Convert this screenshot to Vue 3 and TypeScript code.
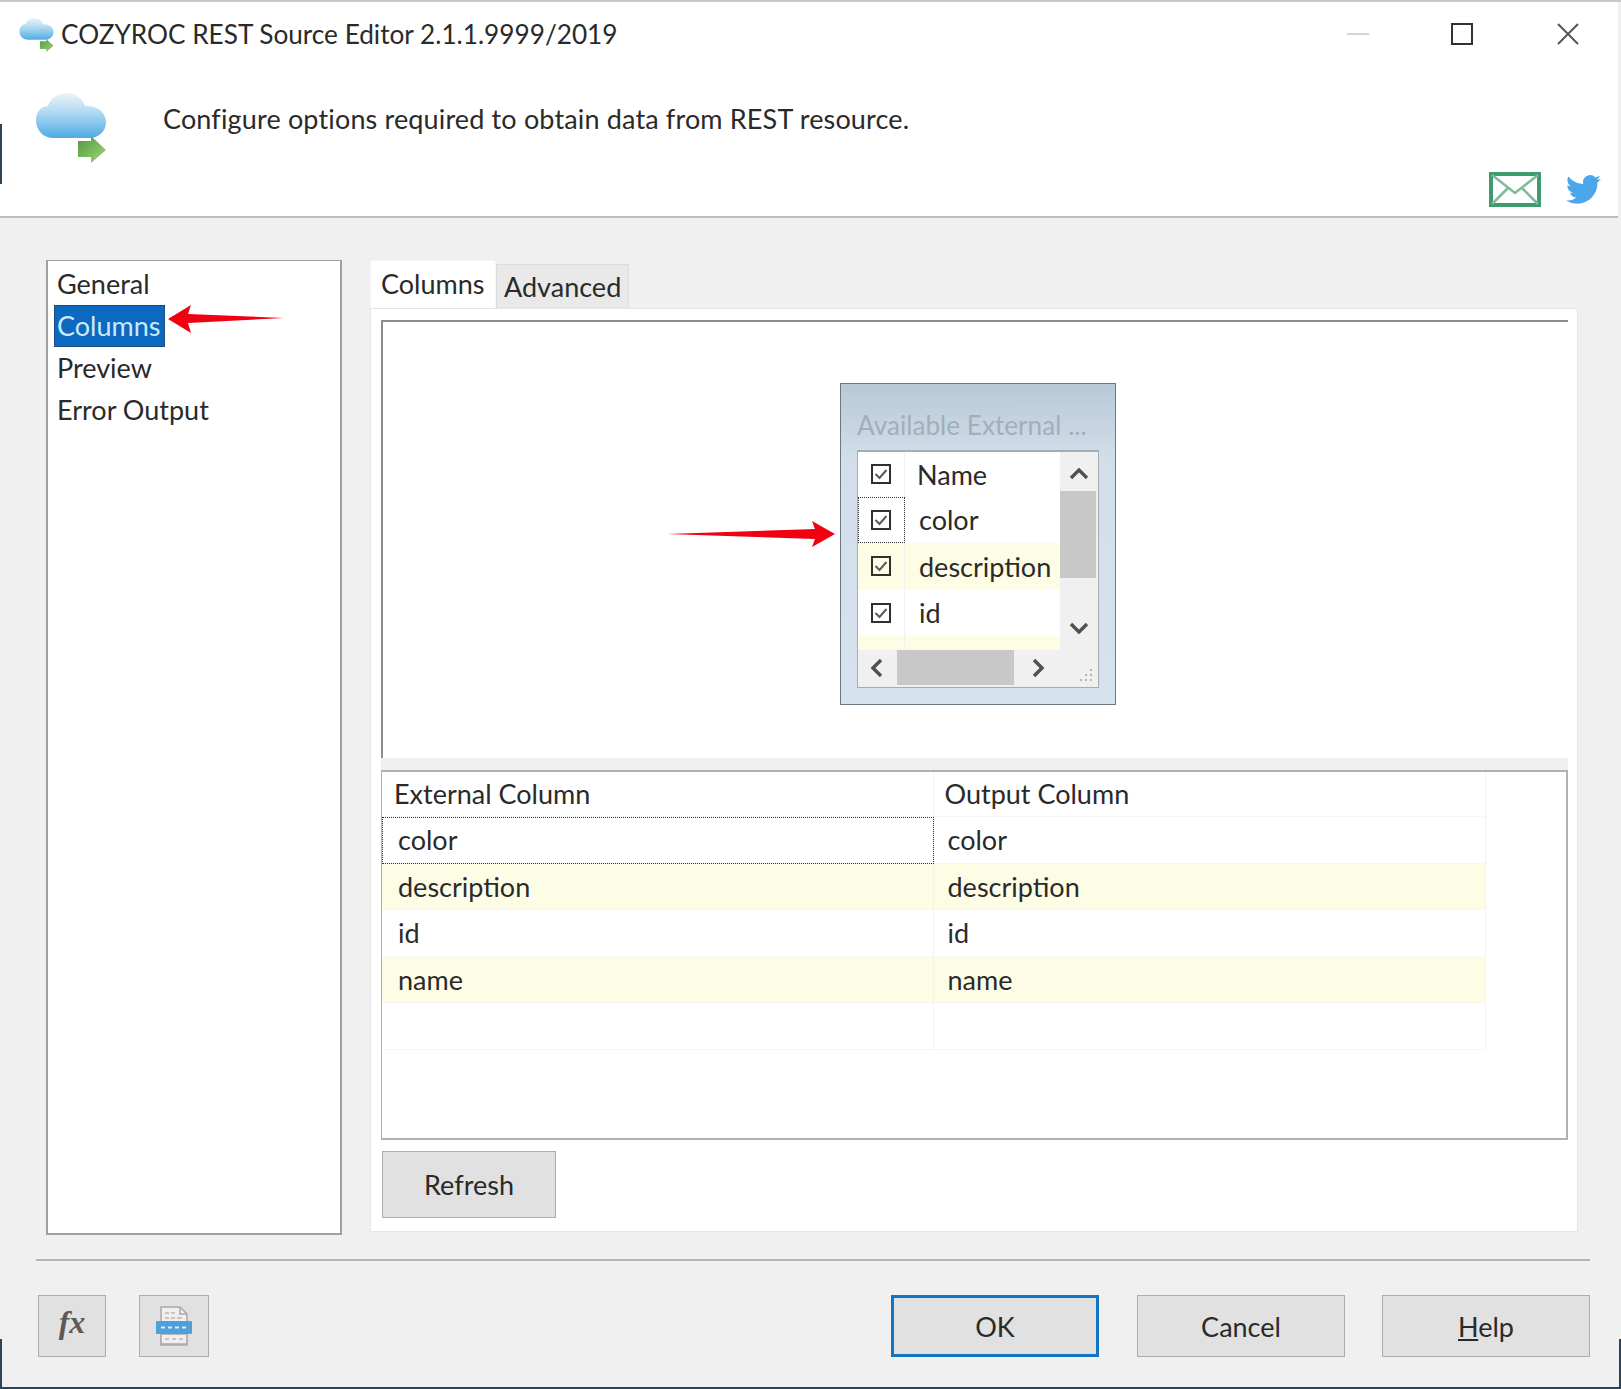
<template>
  <div class="window">
    <!-- header strip -->
    <header class="head">
      <div class="title-row">
        <svg class="cloud-sm" viewBox="0 0 72 72"><use href="#cloud" /></svg>
        <span class="title">COZYROC REST Source Editor 2.1.1.9999/2019</span>
        <div class="win-ctrls">
          <span class="ctl-min"></span>
          <span class="ctl-max"></span>
          <svg class="ctl-close" viewBox="0 0 22 22"><path d="M1 1l20 20M21 1L1 21" /></svg>
        </div>
      </div>
      <div class="desc-row">
        <svg class="cloud-lg" viewBox="0 0 72 72">
          <defs>
            <linearGradient id="cloudFill" x1="0" y1="0" x2="0" y2="1">
              <stop offset="0" stop-color="#eef4f7" />
              <stop offset="0.4" stop-color="#b4dcf2" />
              <stop offset="1" stop-color="#4fabe4" />
            </linearGradient>
            <linearGradient id="arrowFill" x1="0" y1="0" x2="1" y2="1">
              <stop offset="0" stop-color="#4f9a3c" />
              <stop offset="1" stop-color="#a4d47c" />
            </linearGradient>
            <filter id="soft"><feGaussianBlur stdDeviation="0.6" /></filter>
            <g id="cloud" filter="url(#soft)">
              <path fill="url(#cloudFill)" d="M1 29C1 20 7 15 13 15 15 7 24 2 32 2 41 2 48 8 50 15 60 14 71 20 71 31 71 41 63 47 54 47L18 47C8 47 1 39 1 29Z" />
              <path fill="url(#arrowFill)" d="M43 50h13v-5l15 14-15 13v-6H43z" />
            </g>
          </defs>
          <use href="#cloud" />
        </svg>
        <p class="desc">Configure options required to obtain data from REST resource.</p>
      </div>
      <div class="social">
        <svg class="mail" viewBox="0 0 52 35">
          <rect x="2" y="2" width="48" height="31" />
          <path d="M3 3l23 18L49 3M3 32l16-16M49 32L33 16" />
        </svg>
        <svg class="bird" viewBox="0 0 24 24"><path d="M23.953 4.57a10 10 0 01-2.825.775 4.958 4.958 0 002.163-2.723c-.951.555-2.005.959-3.127 1.184a4.92 4.92 0 00-8.384 4.482C7.69 8.095 4.067 6.13 1.64 3.162a4.822 4.822 0 00-.666 2.475c0 1.71.87 3.213 2.188 4.096a4.904 4.904 0 01-2.228-.616v.06a4.923 4.923 0 003.946 4.827 4.996 4.996 0 01-2.212.085 4.936 4.936 0 004.604 3.417 9.867 9.867 0 01-6.102 2.105c-.39 0-.779-.023-1.17-.067a13.995 13.995 0 007.557 2.209c9.053 0 13.998-7.496 13.998-13.985 0-.21 0-.42-.015-.63A9.935 9.935 0 0024 4.59z" /></svg>
      </div>
    </header>

    <main class="body">
      <!-- left nav list -->
      <aside class="nav">
        <div v-for="item in NAV" :key="item" class="nav-item">
          <span :class="{ sel: item === 'Columns' }">{{ item }}</span>
        </div>
        <svg class="arrow arrow-left" viewBox="0 0 116 28"><path d="M0 14L23 0l-3 9 96 4-96 5 3 10z" /></svg>
      </aside>

      <section class="page">
        <div class="tabs">
          <span class="tab active">Columns</span>
          <span class="tab">Advanced</span>
        </div>
        <div class="pane">
          <div class="canvas">
            <svg class="arrow arrow-right" viewBox="0 0 168 26"><path d="M168 13L145 0l3 8L0 13l148 5-3 8z" /></svg>
            <div class="float-box">
              <div class="float-title">Available External ...</div>
              <div class="float-list">
                <div class="float-rows">
                  <div
                    v-for="(row, i) in AVAILABLE"
                    :key="row"
                    class="f-row"
                    :class="{ alt: i === 2, 'f-head': i === 0 }"
                  >
                    <span class="f-check" :class="{ focus: i === 1 }">
                      <svg viewBox="0 0 20 20"><rect x="1" y="1" width="18" height="18" /><path d="M4.5 10l4 4 7-8" /></svg>
                    </span>
                    <span class="f-name">{{ row }}</span>
                  </div>
                  <div class="f-row alt stub"><span class="f-check"></span></div>
                </div>
                <div class="vscroll">
                  <svg class="chev up" viewBox="0 0 20 12"><path d="M2 10l8-8 8 8" /></svg>
                  <div class="vthumb"></div>
                  <svg class="chev down" viewBox="0 0 20 12"><path d="M2 2l8 8 8-8" /></svg>
                </div>
                <div class="hscroll">
                  <svg class="chev left" viewBox="0 0 12 20"><path d="M10 2l-8 8 8 8" /></svg>
                  <div class="hthumb"></div>
                  <svg class="chev right" viewBox="0 0 12 20"><path d="M2 2l8 8-8 8" /></svg>
                </div>
                <svg class="grip" viewBox="0 0 15 15"><path d="M12 1h2v2h-2zM7 6h2v2H7zM12 6h2v2h-2zM2 11h2v2H2zM7 11h2v2H7zM12 11h2v2h-2z" /></svg>
              </div>
            </div>
          </div>

          <div class="split"></div>

          <div class="grid">
            <div class="g-row g-head">
              <span class="g-cell">External Column</span>
              <span class="g-cell">Output Column</span>
            </div>
            <div
              v-for="(name, i) in ROWS"
              :key="i"
              class="g-row"
              :class="{ alt: i % 2 === 1 }"
            >
              <span class="g-cell" :class="{ focus: i === 0 }">{{ name }}</span>
              <span class="g-cell">{{ name }}</span>
            </div>
          </div>

          <button class="btn refresh">Refresh</button>
        </div>
      </section>
    </main>

    <footer class="foot">
      <div class="rule"></div>
      <div class="foot-row">
        <button class="btn icon-btn fx">fx</button>
        <button class="btn icon-btn print">
          <svg viewBox="0 0 36 40">
            <path class="pg" d="M5 1h19l7 7v11H5zM5 32h26v7H5z" />
            <path class="fold" d="M24 1v7h7" />
            <path class="ln" d="M9 7h4M15 7h4M9 12h4M15 12h4M21 12h5" />
            <path class="pgb" d="M5 28h26v10H5z" />
            <path class="ln" d="M9 33h4M16 33h4M23 33h4" />
            <rect class="band" x="0" y="15" width="36" height="13" rx="1" />
            <path class="dots" d="M5 21.500h4M12 21.500h4M19 21.500h4M26 21.500h4" />
          </svg>
        </button>
        <button class="btn act ok">OK</button>
        <button class="btn act">Cancel</button>
        <button class="btn act help"><u>H</u>elp</button>
      </div>
    </footer>
    <i class="edge edge-a"></i>
    <i class="edge edge-b"></i>
    <i class="edge edge-c"></i>
  </div>
</template>

<script setup lang="ts">
const NAV: string[] = ['General', 'Columns', 'Preview', 'Error Output'];
const AVAILABLE: string[] = ['Name', 'color', 'description', 'id'];
const ROWS: string[] = ['color', 'description', 'id', 'name', ''];
</script>

<style>
html, body { margin: 0; background: #f0f0f0; overflow: hidden; }
</style>

<style scoped>
.window {
  position: relative;
  width: 1621px;
  height: 1389px;
  box-sizing: border-box;
  display: flex;
  flex-direction: column;
  background: #f0f0f0;
  border-top: 2px solid #c9c9c9;
  border-bottom: 2px solid #2f4358;
  font-family: "Lato", "Liberation Sans", sans-serif;
  font-size: 27px;
  color: #2a2a2a;
  overflow: hidden;
}

/* header */
.head {
  height: 216px;
  flex-shrink: 0;
  box-sizing: border-box;
  background: white;
  border-bottom: 2px solid #bdbdbd;
  margin-right: 3px;
  padding-top: 11px;
  display: flex;
  flex-direction: column;
}
.title-row {
  height: 42px;
  display: flex;
  align-items: center;
  padding: 0 39px 0 19px;
}
.title { font-size: 26.2px; }
.cloud-sm { width: 35px; height: 35px; margin-right: 7px; }
.win-ctrls { margin-left: auto; display: flex; align-items: center; }
.ctl-min { width: 22px; height: 2px; background: #d4d4d4; }
.ctl-max { width: 22px; height: 22px; box-sizing: border-box; border: 2px solid #333; margin-left: 82px; }
.ctl-close { width: 22px; height: 22px; margin-left: 84px; fill: none; stroke: #555; stroke-width: 2; }
.desc-row { display: flex; margin-top: 36px; padding-left: 34px; }
.cloud-lg { width: 74px; height: 72px; flex-shrink: 0; }
.desc { margin: 10px 0 0 55px; line-height: 36px; letter-spacing: 0.15px; }
.social {
  margin-top: auto;
  padding: 0 17px 9px 0;
  display: flex;
  justify-content: flex-end;
  align-items: center;
  gap: 25px;
}
.mail { width: 52px; height: 35px; }
.mail rect { fill: white; stroke: #3f9b6b; stroke-width: 4; }
.mail path { fill: none; stroke: #7dbb9a; stroke-width: 2.500; }
.bird { width: 35px; height: 35px; fill: #4aa8ea; }

/* body */
.body {
  flex: 1;
  min-height: 0;
  display: flex;
  padding: 42px 43px 0 46px;
}
.nav {
  position: relative;
  width: 296px;
  height: 975px;
  box-sizing: border-box;
  flex-shrink: 0;
  background: white;
  border: 2px solid #a0a0a0;
  border-width: 1px 2px 2px;
  padding: 2px 0 0 6px;
}
.nav-item { height: 42px; line-height: 42px; }
.nav-item span { display: inline-block; padding: 0 3px; height: 42px; }
.nav-item .sel {
  padding-right: 5px;
  background: #0d68c0;
  color: #c9eaff;
  outline: 1px dotted #0a3a70;
  outline-offset: -1px;
}
.arrow { position: absolute; fill: #f00010; }
.arrow-left { left: 120px; top: 44px; width: 116px; height: 28px; }
.page {
  margin-left: 28px;
  flex: 1;
  min-width: 0;
  height: 972px;
  display: flex;
  flex-direction: column;
}
.tabs { height: 48px; display: flex; align-items: flex-end; flex-shrink: 0; }
.tab {
  box-sizing: border-box;
  height: 44px;
  line-height: 44px;
  padding: 0 7px;
  background: #e9e9e9;
  border: 1px solid #dcdcdc;
  border-bottom: none;
}
.tab.active {
  height: 48px;
  line-height: 46px;
  width: 126px;
  padding: 0 10px;
  background: white;
  border-color: #f5f5f5;
}
.pane {
  flex: 1;
  min-height: 0;
  background: white;
  border: 1px solid #e6e6e6;
  padding: 11px 9px 0 10px;
  display: flex;
  flex-direction: column;
}

/* designer canvas */
.canvas {
  position: relative;
  height: 438px;
  flex-shrink: 0;
  box-sizing: border-box;
  border-top: 2px solid #8c8c8c;
  border-left: 2px solid #8c8c8c;
  padding: 61px 0 0 5px;
  display: flex;
  justify-content: center;
  align-items: flex-start;
}
.arrow-right { left: 284px; top: 199px; width: 168px; height: 26px; }
.float-box {
  width: 276px;
  height: 322px;
  box-sizing: border-box;
  border: 1px solid #6d7782;
  background: linear-gradient(#b8c8d7, #d2dfeb 24%, #d6e3ef);
  padding: 0 16px;
}
.float-title {
  height: 66px;
  box-sizing: border-box;
  padding-top: 25px;
  line-height: 32px;
  font-size: 26.2px;
  color: #a4aeb9;
  white-space: nowrap;
}
.float-list {
  position: relative;
  height: 238px;
  box-sizing: border-box;
  border: 1px solid #a4acb4;
  border-top-width: 2px;
  background: #f0f0f0;
  display: grid;
  grid-template-columns: 202px 1fr;
  grid-template-rows: 198px 1fr;
  overflow: hidden;
}
.float-rows { background: white; overflow: hidden; }
.f-row { height: 46.5px; display: flex; align-items: center; }
.f-row.f-head { height: 44.5px; }
.f-row.alt { background: #fdfde6; }
.f-row.stub { height: 14px; }
.f-check {
  width: 47px;
  height: 100%;
  box-sizing: border-box;
  flex-shrink: 0;
  background: white;
  display: flex;
  align-items: center;
  justify-content: center;
  border-right: 1px solid #f2f2f2;
}
.f-row.alt .f-check { background: #fdfde6; }
.f-check.focus { outline: 1px dotted #333; outline-offset: -1px; }
.f-check svg { width: 20px; height: 20px; fill: none; stroke: #303030; stroke-width: 2; }
.f-check svg path { stroke: #5a5a5a; stroke-width: 2; }
.f-name { margin-left: 14px; }
.f-head .f-name { margin-left: 12px; }
.vscroll { position: relative; background: #f0f0f0; }
.vthumb { position: absolute; left: 0; right: 2px; top: 39px; height: 87px; background: #c8c8c8; }
.hscroll { position: relative; grid-column: 1 / span 1; background: #f0f0f0; }
.hthumb { position: absolute; left: 39px; width: 117px; top: 0; bottom: 2px; background: #c8c8c8; }
.chev { position: absolute; fill: none; stroke: #505050; stroke-width: 3.4; }
.chev.up, .chev.down { width: 20px; height: 12px; left: 9px; }
.chev.up { top: 16px; }
.chev.down { top: 170px; }
.chev.left, .chev.right { width: 12px; height: 20px; top: 8px; }
.chev.left { left: 13px; }
.chev.right { left: 174px; }
.grip { position: absolute; right: 5px; bottom: 4px; width: 15px; height: 15px; fill: #b4b4b4; }
.split { height: 12px; flex-shrink: 0; background: #f0f0f0; }

/* mapping grid */
.grid {
  height: 370px;
  flex-shrink: 0;
  box-sizing: border-box;
  border: 2px solid #b0b0b0;
  border-width: 2px 2px 2px 1px;
}
.g-row { width: 1105px; height: 46.5px; display: flex; }
.g-row.g-head { height: 45px; }
.g-row.alt .g-cell { background: #fdfde6; }
.g-cell {
  width: 552.5px;
  box-sizing: border-box;
  padding-left: 14px;
  line-height: 46px;
  border-right: 1px solid #f2f2f2;
  border-bottom: 1px solid #f6f6f6;
}
.g-cell:first-child { width: 551.5px; padding-left: 16px; }
.g-head .g-cell { padding-left: 11px; line-height: 44px; }
.g-head .g-cell:first-child { padding-left: 12px; }
.g-cell.focus { outline: 1px dotted #333; outline-offset: -1px; }

/* buttons */
.btn {
  font: inherit;
  color: inherit;
  background: #e1e1e1;
  border: 1px solid #adadad;
  border-radius: 0;
  padding: 0;
}
.refresh { width: 174px; height: 67px; margin: 11px 0 0 1px; flex-shrink: 0; }

/* footer */
.foot { height: 128px; flex-shrink: 0; padding: 0 31px 0 36px; }
.rule { height: 2px; background: #b4b4b4; }
.foot-row { display: flex; margin-top: 34px; height: 62px; }
.foot-row .btn { height: 62px; }
.icon-btn { width: 68px; margin-left: 2px; display: flex; align-items: center; justify-content: center; }
.print { width: 70px; margin-left: 33px; }
.print svg { width: 36px; height: 40px; }
.print .pg, .print .pgb { fill: #efefef; stroke: #a9a9a9; stroke-width: 1.500; }
.print .fold { fill: none; stroke: #a9a9a9; stroke-width: 1.500; }
.print .ln { fill: none; stroke: #b8b8b8; stroke-width: 1.500; }
.print .band { fill: #4f9fdc; }
.print .dots { fill: none; stroke: #d8ecfa; stroke-width: 2; }
.fx {
  font-family: "Liberation Serif", serif;
  font-style: italic;
  font-weight: bold;
  font-size: 32px;
  padding-bottom: 7px;
  color: #5a5a5a;
}
.act { width: 208px; margin-left: 38px; }
.act.help { margin-left: 37px; }
.act.ok { margin-left: auto; box-sizing: border-box; border: 3px solid #1474c4; }

/* scraps of the desktop behind the window */
.edge { position: absolute; width: 2px; background: #2f4358; }
.edge-a { left: 0; top: 122px; height: 60px; }
.edge-b { left: 0; top: 1337px; height: 50px; }
.edge-c { right: 0; top: 1337px; height: 50px; }
</style>
